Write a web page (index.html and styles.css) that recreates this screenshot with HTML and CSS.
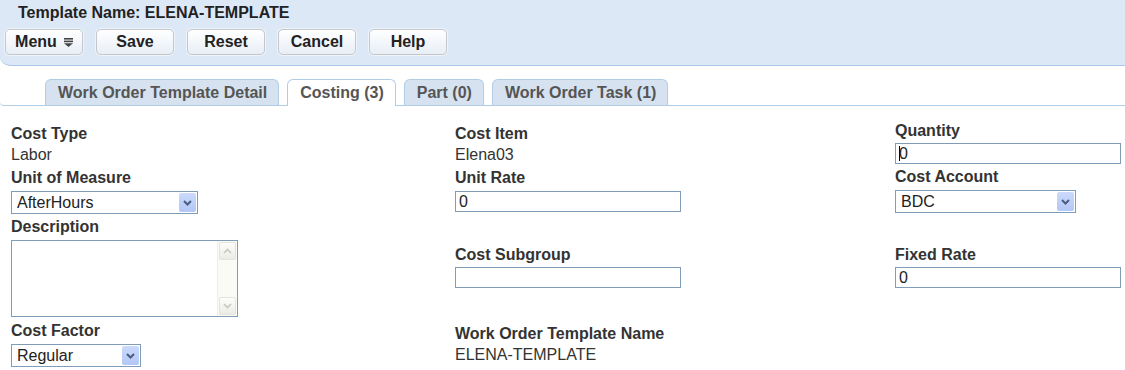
FILE: index.html
```html
<!DOCTYPE html>
<html lang="en">

<head>
  <meta charset="UTF-8" />
  <meta name="viewport" content="width=device-width, initial-scale=1.0" />
  <title>Work Order Template - Costing</title>
  <link rel="stylesheet" href="styles.css">
</head>

<body>
  <header class="header">
    <h1 class="title">Template Name: ELENA-TEMPLATE</h1>
    <nav class="toolbar">
      <div class="btn">Menu
        <svg class="menu-icon" width="9" height="9" viewBox="0 0 9 9">
          <rect x="0" y="0" width="9" height="1.6" fill="#444" />
          <rect x="0" y="2.6" width="9" height="1.6" fill="#444" />
          <polygon points="0,5.2 9,5.2 4.5,9" fill="#444" />
        </svg>
      </div>
      <div class="btn">Save</div>
      <div class="btn">Reset</div>
      <div class="btn">Cancel</div>
      <div class="btn">Help</div>
    </nav>
  </header>

  <section class="tabs">
    <div class="tab">Work Order Template Detail</div>
    <div class="tab active">Costing (3)</div>
    <div class="tab">Part (0)</div>
    <div class="tab">Work Order Task (1)</div>
  </section>

  <article class="form">
    <section class="col col-left">
      <div class="field">
        <label>Cost Type</label>
        <div class="value">Labor</div>
      </div>
      <div class="field">
        <label>Unit of Measure</label>
        <div class="select uom"><span>AfterHours</span><span class="arrow"><svg width="9" height="6" viewBox="0 0 9 6"><polyline points="1,1 4.5,4.5 8,1" fill="none" stroke="#4a5d80" stroke-width="2" /></svg></span></div>
      </div>
      <div class="field desc">
        <label>Description</label>
        <div class="textarea">
          <div class="text"></div>
          <div class="scroll">
            <span class="scroll-btn"><svg width="9" height="6" viewBox="0 0 9 6"><polyline points="1,5 4.5,1.5 8,5" fill="none" stroke="#c8c8c0" stroke-width="1.6" /></svg></span>
            <span class="scroll-btn"><svg width="9" height="6" viewBox="0 0 9 6"><polyline points="1,1 4.5,4.5 8,1" fill="none" stroke="#c8c8c0" stroke-width="1.6" /></svg></span>
          </div>
        </div>
      </div>
      <div class="field">
        <label>Cost Factor</label>
        <div class="select factor"><span>Regular</span><span class="arrow"><svg width="9" height="6" viewBox="0 0 9 6"><polyline points="1,1 4.5,4.5 8,1" fill="none" stroke="#4a5d80" stroke-width="2" /></svg></span></div>
      </div>
    </section>

    <section class="col col-mid">
      <div class="field">
        <label>Cost Item</label>
        <div class="value">Elena03</div>
      </div>
      <div class="field">
        <label>Unit Rate</label>
        <div class="input">0</div>
      </div>
      <div class="field spaced">
        <label>Cost Subgroup</label>
        <div class="input"></div>
      </div>
      <div class="field spaced-more">
        <label>Work Order Template Name</label>
        <div class="value">ELENA-TEMPLATE</div>
      </div>
    </section>

    <section class="col col-right">
      <div class="field">
        <label>Quantity</label>
        <div class="input"><span class="caret"></span>0</div>
      </div>
      <div class="field">
        <label>Cost Account</label>
        <div class="select account"><span>BDC</span><span class="arrow"><svg width="9" height="6" viewBox="0 0 9 6"><polyline points="1,1 4.5,4.5 8,1" fill="none" stroke="#4a5d80" stroke-width="2" /></svg></span></div>
      </div>
      <div class="field spaced">
        <label>Fixed Rate</label>
        <div class="input">0</div>
      </div>
    </section>
  </article>
</body>

</html>
```

FILE: styles.css
```css
body {
  margin: 0;
  font-family: "Liberation Sans", Arial, sans-serif;
  font-size: 16px;
  color: #333;
  background-color: #fff;
}

.header {
  padding: 3px 0 10px 5px;
  background-color: #dce8f5;
  border-bottom: 1px solid #a9c8e8;
  border-bottom-left-radius: 10px;
}

.title {
  margin: 0 0 0 13px;
  font-size: 16px;
  line-height: 19px;
  font-weight: bold;
  color: #222;
}

.toolbar {
  display: flex;
  gap: 13px;
  margin-top: 7px;
}

.btn {
  display: flex;
  align-items: center;
  justify-content: center;
  gap: 7px;
  box-sizing: border-box;
  width: 78px;
  height: 26px;
  border: 1px solid #c4c8cc;
  border-radius: 5px;
  background: linear-gradient(#ffffff, #e8eef6);
  box-shadow: 0 0 0 1px rgba(255, 255, 255, 0.5);
  font-weight: bold;
  color: #222;
}

.menu-icon {
  margin-top: 1px;
}

.tabs {
  display: flex;
  gap: 8px;
  margin-top: 13px;
  padding-left: 45px;
  border-bottom: 1px solid #b0cde8;
  border-bottom-left-radius: 4px;
}

.tab {
  box-sizing: border-box;
  height: 26px;
  padding: 0 11px 0 12px;
  line-height: 25px;
  border: 1px solid #b0cde8;
  border-bottom: none;
  border-radius: 6px 6px 0 0;
  background-color: #d6e2ef;
  font-weight: bold;
  color: #555;
}

.tab.active {
  height: 27px;
  margin-bottom: -1px;
  background-color: #fff;
}

.form {
  display: grid;
  grid-template-columns: 444px 440px 1fr;
  padding: 14px 0 0 11px;
}

.col-left,
.col-mid {
  padding-top: 3px;
}

.field {
  margin-bottom: 2px;
}

.field label {
  display: block;
  line-height: 21px;
  font-weight: bold;
}

.value {
  line-height: 21px;
}

.col-mid .spaced {
  margin-top: 32px;
}

.col-right .spaced {
  margin-top: 31px;
}

.spaced .input {
  margin-top: 2px;
}

.spaced-more {
  margin-top: 35px;
}

.desc {
  margin-bottom: 3px;
}

.input {
  display: flex;
  align-items: center;
  box-sizing: border-box;
  width: 226px;
  height: 21px;
  margin-top: 3px;
  padding-left: 3px;
  border: 1px solid #7f9db9;
  color: #222;
}

.col-right .field:first-child .input {
  margin-top: 2px;
}

.caret {
  width: 1px;
  height: 15px;
  margin-right: -1px;
  background-color: #000;
}

.select {
  display: flex;
  align-items: center;
  justify-content: space-between;
  box-sizing: border-box;
  height: 23px;
  margin-top: 3px;
  padding: 0 1px 0 5px;
  border: 1px solid #7f9db9;
  color: #222;
}

.uom {
  width: 187px;
}

.factor {
  width: 130px;
}

.account {
  width: 181px;
}

.arrow {
  display: flex;
  align-items: center;
  justify-content: center;
  width: 17px;
  height: 19px;
  border-radius: 2px;
  background: linear-gradient(#cbdafc, #b3c7f6);
}

.textarea {
  display: flex;
  box-sizing: border-box;
  width: 227px;
  height: 77px;
  margin-top: 3px;
  border: 1px solid #7f9db9;
}

.text {
  flex: 1;
}

.scroll {
  display: flex;
  flex-direction: column;
  justify-content: space-between;
  width: 17px;
  padding: 1px 1px;
  background-color: #fbfbf6;
  border-left: 1px solid #eeeee6;
}

.scroll-btn {
  display: flex;
  align-items: center;
  justify-content: center;
  height: 16px;
  border: 1px solid #e4e4dc;
  border-radius: 2px;
  background: linear-gradient(#fdfdfb, #ecece4);
}
```
